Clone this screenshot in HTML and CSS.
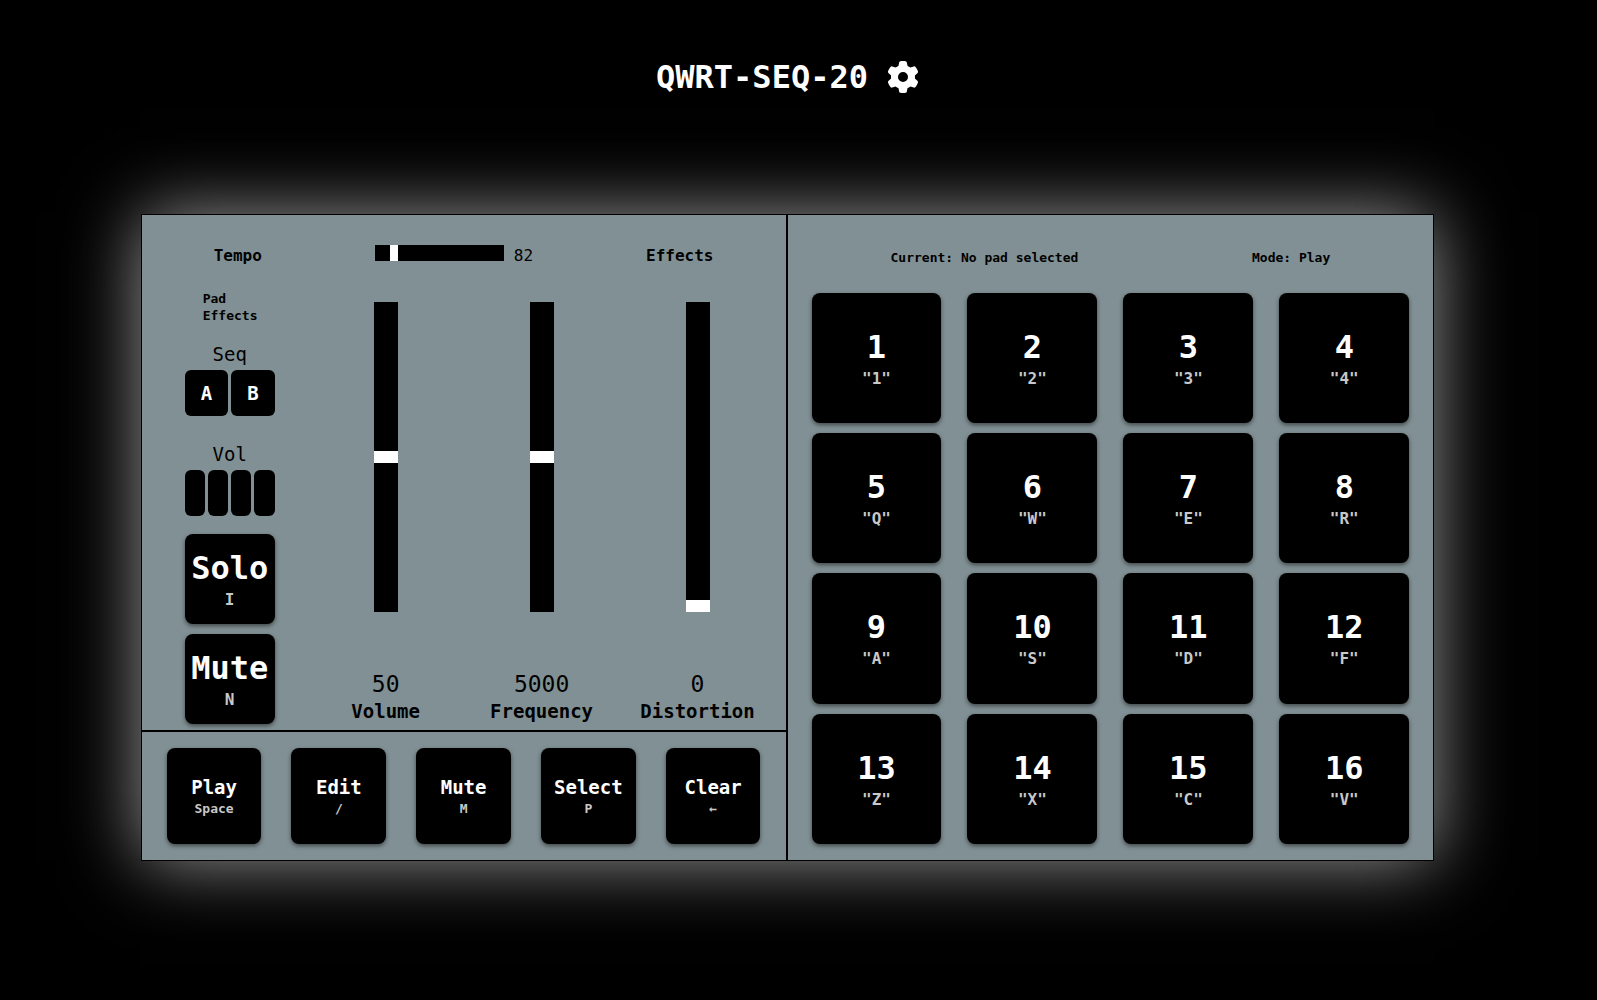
FILE: index.html
```html
<!DOCTYPE html>
<html lang="en">
<head>
<meta charset="utf-8">
<title>QWRT-SEQ-20</title>
<link rel="stylesheet" href="styles.css">
</head>
<body>
<header class="header">
  <h1 class="title">QWRT-SEQ-20</h1>
  <button class="settings" type="button" aria-label="Settings">
    <svg class="gear" viewBox="0 0 512 512" aria-hidden="true"><path fill="currentColor" d="M495.9 166.6c3.2 8.7 .5 18.4-6.4 24.6l-43.3 39.4c1.1 8.3 1.7 16.8 1.7 25.4s-.6 17.1-1.7 25.4l43.3 39.4c6.9 6.2 9.6 15.9 6.4 24.6c-4.4 11.9-9.7 23.3-15.8 34.3l-4.7 8.1c-6.6 11-14 21.4-22.1 31.2c-5.9 7.2-15.7 9.6-24.5 6.8l-55.7-17.7c-13.4 10.3-28.2 18.9-44 25.4l-12.5 57.1c-2 9.1-9 16.3-18.2 17.8c-13.8 2.3-28 3.5-42.5 3.5s-28.7-1.2-42.5-3.5c-9.2-1.5-16.2-8.7-18.2-17.8l-12.5-57.1c-15.8-6.5-30.6-15.1-44-25.4L83.1 425.9c-8.8 2.8-18.6 .3-24.5-6.8c-8.1-9.8-15.5-20.2-22.1-31.2l-4.7-8.1c-6.1-11-11.4-22.4-15.8-34.3c-3.2-8.7-.5-18.4 6.4-24.6l43.3-39.4C64.6 273.1 64 264.6 64 256s.6-17.1 1.7-25.4L22.4 191.2c-6.9-6.2-9.6-15.9-6.4-24.6c4.4-11.9 9.7-23.3 15.8-34.3l4.7-8.1c6.6-11 14-21.4 22.1-31.2c5.9-7.2 15.7-9.6 24.5-6.8l55.7 17.7c13.4-10.3 28.2-18.9 44-25.4l12.5-57.1c2-9.1 9-16.3 18.2-17.8C227.3 1.2 241.5 0 256 0s28.7 1.2 42.5 3.5c9.2 1.5 16.2 8.7 18.2 17.8l12.5 57.1c15.8 6.5 30.6 15.1 44 25.4l55.7-17.7c8.8-2.8 18.6-.3 24.5 6.8c8.1 9.8 15.5 20.2 22.1 31.2l4.7 8.1c6.1 11 11.4 22.4 15.8 34.3zM256 336a80 80 0 1 0 0-160 80 80 0 1 0 0 160z"/></svg>
  </button>
</header>
<main class="console">
  <div class="left">
    <section class="controls">
      <div class="controls-header">
        <label class="heading" for="tempo">Tempo</label>
        <div class="tempo">
          <input class="tempo-range" id="tempo" type="range" min="60" max="240" value="82">
          <output class="tempo-value" for="tempo">82</output>
        </div>
        <h2 class="heading">Effects</h2>
      </div>
      <div class="columns">
        <div class="column">
          <div class="pad-effects">
            <h3 class="pad-title">Pad<br>Effects</h3>
            <div class="group">
              <span class="group-label">Seq</span>
              <div class="group-buttons">
                <button class="mini" type="button">A</button>
                <button class="mini" type="button">B</button>
              </div>
            </div>
            <div class="group group-vol">
              <span class="group-label">Vol</span>
              <div class="group-buttons">
                <button class="mini" type="button" aria-label="Volume 1"></button>
                <button class="mini" type="button" aria-label="Volume 2"></button>
                <button class="mini" type="button" aria-label="Volume 3"></button>
                <button class="mini" type="button" aria-label="Volume 4"></button>
              </div>
            </div>
            <div class="toggles">
              <button class="key toggle" type="button"><span class="name">Solo</span><span class="hint">I</span></button>
              <button class="key toggle" type="button"><span class="name">Mute</span><span class="hint">N</span></button>
            </div>
          </div>
        </div>
        <div class="column">
          <input class="fader" id="volume" type="range" min="0" max="100" value="50">
          <output class="value" for="volume">50</output>
          <label class="label" for="volume">Volume</label>
        </div>
        <div class="column">
          <input class="fader" id="frequency" type="range" min="0" max="10000" value="5000">
          <output class="value" for="frequency">5000</output>
          <label class="label" for="frequency">Frequency</label>
        </div>
        <div class="column">
          <input class="fader" id="distortion" type="range" min="0" max="100" value="0">
          <output class="value" for="distortion">0</output>
          <label class="label" for="distortion">Distortion</label>
        </div>
      </div>
    </section>
    <section class="transport">
      <button class="key command" type="button"><span class="name">Play</span><span class="hint">Space</span></button>
      <button class="key command" type="button"><span class="name">Edit</span><span class="hint">/</span></button>
      <button class="key command" type="button"><span class="name">Mute</span><span class="hint">M</span></button>
      <button class="key command" type="button"><span class="name">Select</span><span class="hint">P</span></button>
      <button class="key command" type="button"><span class="name">Clear</span><span class="hint">←</span></button>
    </section>
  </div>
  <section class="right">
    <div class="status">
      <p class="status-text">Current: No pad selected</p>
      <p class="status-text">Mode: Play</p>
    </div>
    <div class="pads">
      <button class="key" type="button"><span class="name">1</span><span class="hint">"1"</span></button>
      <button class="key" type="button"><span class="name">2</span><span class="hint">"2"</span></button>
      <button class="key" type="button"><span class="name">3</span><span class="hint">"3"</span></button>
      <button class="key" type="button"><span class="name">4</span><span class="hint">"4"</span></button>
      <button class="key" type="button"><span class="name">5</span><span class="hint">"Q"</span></button>
      <button class="key" type="button"><span class="name">6</span><span class="hint">"W"</span></button>
      <button class="key" type="button"><span class="name">7</span><span class="hint">"E"</span></button>
      <button class="key" type="button"><span class="name">8</span><span class="hint">"R"</span></button>
      <button class="key" type="button"><span class="name">9</span><span class="hint">"A"</span></button>
      <button class="key" type="button"><span class="name">10</span><span class="hint">"S"</span></button>
      <button class="key" type="button"><span class="name">11</span><span class="hint">"D"</span></button>
      <button class="key" type="button"><span class="name">12</span><span class="hint">"F"</span></button>
      <button class="key" type="button"><span class="name">13</span><span class="hint">"Z"</span></button>
      <button class="key" type="button"><span class="name">14</span><span class="hint">"X"</span></button>
      <button class="key" type="button"><span class="name">15</span><span class="hint">"C"</span></button>
      <button class="key" type="button"><span class="name">16</span><span class="hint">"V"</span></button>
    </div>
  </section>
</main>
</body>
</html>
```
FILE: styles.css
```css
* {
  box-sizing: border-box;
}

body {
  min-height: 100vh;
  margin: 0;
  padding: 60px 22px 60px 0;
  background: #000;
  color: #000;
  font-family: "DejaVu Sans Mono", "Liberation Mono", monospace;
}

button,
input {
  margin: 0;
  padding: 0;
  border: 0;
  font: inherit;
}

h1, h2, h3, p {
  margin: 0;
}

.header {
  display: flex;
  justify-content: center;
  align-items: center;
  gap: 19px;
  margin-bottom: 120px;
  color: #fff;
}

.title {
  font-size: 32px;
  line-height: 34px;
}

.settings {
  display: flex;
  background: none;
  color: inherit;
}

.gear {
  width: 32px;
  height: 32px;
}

.console {
  display: grid;
  grid-template-columns: 1fr 1fr;
  width: 81vw;
  min-width: 1100px;
  aspect-ratio: 2 / 1;
  margin: 0 auto;
  border: 1px solid #000;
  background: #819094;
  box-shadow: 0 0 70px rgba(255, 255, 255, 0.6);
}

.left {
  display: flex;
  flex-direction: column;
  border-right: 2px solid #000;
}

.controls {
  display: flex;
  flex: 1;
  flex-direction: column;
  padding-bottom: 6px;
}

.controls-header {
  display: flex;
  justify-content: space-between;
  padding: 30px 72px 0;
}

.heading {
  font-size: 16px;
  font-weight: bold;
  line-height: 22px;
}

.tempo {
  display: flex;
  gap: 10px;
}

.tempo-range {
  appearance: none;
  width: 129px;
  height: 16px;
  background: #000;
}

.tempo-range::-webkit-slider-thumb {
  appearance: none;
  width: 8px;
  height: 16px;
  background: #fff;
}

.tempo-value {
  font-size: 16px;
  line-height: 22px;
}

.columns {
  display: grid;
  flex: 1;
  grid-template-columns: repeat(4, 1fr);
  padding: 0 10px;
}

.column {
  display: flex;
  flex-direction: column;
  justify-content: flex-end;
  align-items: center;
}

.fader {
  appearance: none;
  writing-mode: vertical-lr;
  direction: rtl;
  width: 24px;
  height: 310px;
  margin-bottom: 58px;
  background: #000;
}

.fader::-webkit-slider-thumb {
  appearance: none;
  width: 24px;
  height: 12px;
  background: #fff;
}

.value {
  font-size: 23px;
  line-height: 28px;
}

.label {
  font-size: 19px;
  font-weight: bold;
  line-height: 26px;
}

.pad-effects {
  width: 90px;
}

.pad-title {
  padding-left: 18px;
  font-size: 13px;
  line-height: 17px;
}

.group {
  display: flex;
  flex-direction: column;
  gap: 4px;
  margin: 18px 0 26px;
}

.group + .group {
  margin-top: 0;
}

.group-vol {
  margin-bottom: 18px;
}

.group-label {
  font-size: 19px;
  line-height: 24px;
  text-align: center;
}

.group-buttons {
  display: flex;
  gap: 3px;
}

.mini {
  flex: 1;
  height: 46px;
  border-radius: 6px;
  background: #000;
  color: #fff;
  font-size: 19px;
  font-weight: bold;
}

.toggles {
  display: grid;
  gap: 10px;
}

.key {
  display: flex;
  flex-direction: column;
  justify-content: center;
  align-items: center;
  border-radius: 8px;
  background: #000;
  box-shadow: 0 2px 4px rgba(0, 0, 0, 0.5);
  color: #fff;
  font-weight: bold;
}

.name {
  font-size: 32px;
  line-height: 42px;
}

.hint {
  color: #c8c8c8;
  font-size: 16px;
  line-height: 22px;
}

.toggle {
  height: 90px;
}

.transport {
  display: grid;
  grid-template-columns: repeat(5, 1fr);
  gap: 30px;
  padding: 16px 25px;
  border-top: 2px solid #000;
}

.command {
  height: 96px;
}

.command .name {
  font-size: 19px;
  line-height: 26px;
}

.command .hint {
  font-size: 13px;
  line-height: 18px;
}

.right {
  display: flex;
  flex-direction: column;
  padding: 0 24px 16px;
}

.status {
  display: flex;
  justify-content: space-between;
  align-items: center;
  height: 78px;
  padding: 8px 79px 0;
}

.status-text {
  font-size: 13px;
  font-weight: bold;
  line-height: 18px;
}

.pads {
  display: grid;
  flex: 1;
  grid-template-columns: repeat(4, 1fr);
  grid-template-rows: repeat(4, 1fr);
  gap: 10px 26px;
}
```
